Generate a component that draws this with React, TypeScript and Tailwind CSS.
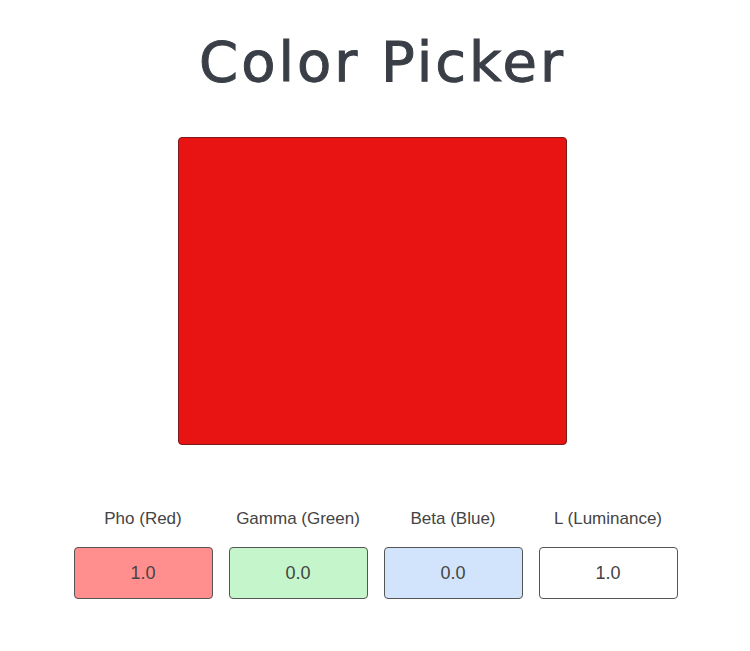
import React from "react";

const fields = [
  { label: "Pho (Red)", value: "1.0", bg: "bg-[#ff8e8e]" },
  { label: "Gamma (Green)", value: "0.0", bg: "bg-[#c5f5ca]" },
  { label: "Beta (Blue)", value: "0.0", bg: "bg-[#d1e4fc]" },
  { label: "L (Luminance)", value: "1.0", bg: "bg-white" },
];

export default function App() {
  return (
    <div className="w-[750px] h-[651px] bg-white flex flex-col items-center font-['Liberation_Sans',Arial,sans-serif]">
      <h1 className="mt-[30px] h-[64px] leading-[64px] text-[56px] text-[#3a3f47] font-['DejaVu_Sans',sans-serif] tracking-[3px] ml-[15px] [-webkit-text-stroke:1px_#3a3f47]">
        Color Picker
      </h1>
      <div className="mt-[43px] w-[389px] h-[308px] bg-[#e81414] border border-[#7a1a1a] rounded-[4px] -ml-[6px]"></div>
      <div className="mt-[62px] flex gap-[16px] ml-[1px]">
        {fields.map((f) => (
          <div key={f.label} className="flex flex-col items-center w-[139px]">
            <div className="h-[24px] leading-[24px] text-[17px] text-[#444] whitespace-nowrap">{f.label}</div>
            <div className={`mt-[16px] w-[139px] h-[52px] ${f.bg} border border-[#555] rounded-[4px] flex items-center justify-center text-[18px] text-[#444]`}>
              {f.value}
            </div>
          </div>
        ))}
      </div>
    </div>
  );
}
